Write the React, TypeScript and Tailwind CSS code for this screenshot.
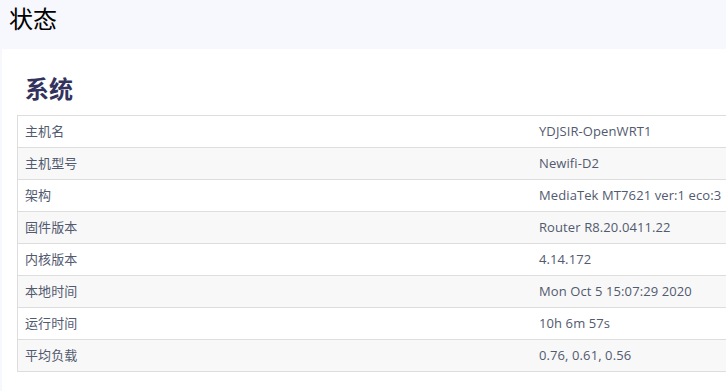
import React from "react";

const rows: [string, string][] = [
  ["主机名", "YDJSIR-OpenWRT1"],
  ["主机型号", "Newifi-D2"],
  ["架构", "MediaTek MT7621 ver:1 eco:3"],
  ["固件版本", "Router R8.20.0411.22"],
  ["内核版本", "4.14.172"],
  ["本地时间", "Mon Oct 5 15:07:29 2020"],
  ["运行时间", "10h 6m 57s"],
  ["平均负载", "0.76, 0.61, 0.56"],
];

export default function App() {
  return (
    <div
      className="w-[726px] h-[391px] overflow-hidden bg-[#f7f8fd]"
      style={{ fontFamily: '"Open Sans", "Noto Sans CJK SC", sans-serif' }}
    >
      <div className="h-[49px] pl-[9px] pt-[2px] text-[24px] leading-[34px] text-black">状态</div>
      <div className="ml-[2px] w-[1000px] h-[400px] bg-white pt-[24px] pl-[15px]">
        <h2 className="pl-[8px] text-[24px] font-bold leading-[32px] text-[#32325d] mb-[10px]">系统</h2>
        <div className="w-[1000px] border-t border-l border-[#dddddd] text-[13px] tracking-[0.1px] text-[#525a6f]">
          {rows.map(([k, v], i) => (
            <div
              key={k}
              className={`flex h-[32px] items-center border-b border-[#dddddd] ${i % 2 === 1 ? "bg-[#f8f8f8]" : "bg-white"}`}
            >
              <div className="w-[521px] pl-[7px] shrink-0">{k}</div>
              <div className="whitespace-nowrap">{v}</div>
            </div>
          ))}
        </div>
      </div>
    </div>
  );
}
